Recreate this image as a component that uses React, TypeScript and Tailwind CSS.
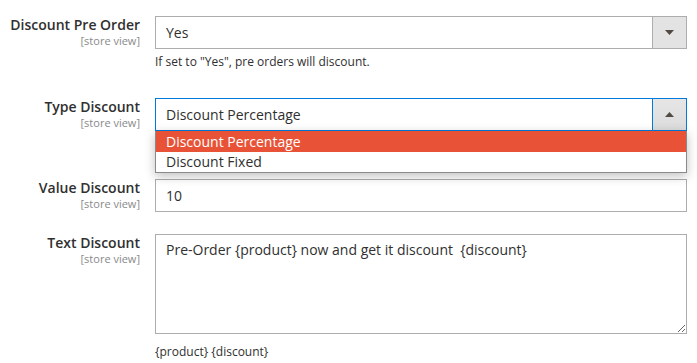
import React from "react";

const labelCls = "text-right text-[14px] leading-[19px] font-semibold text-[#303030]";
const scopeCls = "block text-right text-[11px] leading-[14px] font-normal text-[#8a8a8a]";

function Label({ text }: { text: string }) {
  return (
    <div className="-mt-px">
      <div className={labelCls}>{text}</div>
      <span className={scopeCls}>[store view]</span>
    </div>
  );
}

function Caret({ up }: { up?: boolean }) {
  return (
    <svg width="9" height="5" viewBox="0 0 9 5" className="block">
      {up ? <path d="M0 5 L4.5 0 L9 5 Z" fill="#514943" /> : <path d="M0 0 L9 0 L4.5 5 Z" fill="#514943" />}
    </svg>
  );
}

export default function App() {
  return (
    <div className="w-[697px] h-[363px] overflow-hidden bg-white font-['Open_Sans',sans-serif] text-[#303030] pr-[10px] pt-[16px]">
      {/* Discount Pre Order */}
      <div className="grid grid-cols-[140px_1fr] gap-x-[15px]">
        <Label text="Discount Pre Order" />
        <div>
          <div className="flex h-[33px] border border-[#adadad] bg-white">
            <div className="flex-1 pl-[10px] text-[14px] leading-[31px]">Yes</div>
            <div className="flex w-[34px] items-center justify-center border-l border-[#adadad] bg-[#e3e3e3]">
              <Caret />
            </div>
          </div>
          <div className="mt-[4px] text-[12px] leading-[18px]">If set to "Yes", pre orders will discount.</div>
        </div>
      </div>

      {/* Type Discount, open */}
      <div className="relative z-10 mt-[27px] grid grid-cols-[140px_1fr] gap-x-[15px]">
        <Label text="Type Discount" />
        <div className="relative">
          <div className="flex h-[33px] border border-[#007bdb] bg-white">
            <div className="flex-1 pl-[10px] text-[14px] leading-[31px]">Discount Percentage</div>
            <div className="flex w-[34px] items-center justify-center border-l border-[#007bdb] bg-gradient-to-b from-[#e6e6e6] to-[#dcdcdc]">
              <Caret up />
            </div>
          </div>
          <div className="absolute left-0 right-0 top-[33px] border border-t-0 border-[#8a8a8a] bg-white shadow-[0_3px_10px_rgba(0,0,0,0.25)]">
            <div className="h-[21px] bg-[#e85337] pl-[10px] text-[14px] leading-[21px] text-white">Discount Percentage</div>
            <div className="h-[20px] pl-[10px] text-[14px] leading-[20px]">Discount Fixed</div>
          </div>
        </div>
      </div>

      {/* Value Discount */}
      <div className="mt-[48px] grid grid-cols-[140px_1fr] gap-x-[15px]">
        <Label text="Value Discount" />
        <input
          readOnly
          value="10"
          className="h-[33px] w-full border border-[#adadad] bg-white pl-[10px] text-[14px] text-[#303030] outline-none"
        />
      </div>

      {/* Text Discount */}
      <div className="mt-[22px] grid grid-cols-[140px_1fr] gap-x-[15px]">
        <Label text="Text Discount" />
        <div>
          <textarea
            readOnly
            value="Pre-Order {product} now and get it discount  {discount}"
            className="block h-[100px] w-full border border-[#adadad] bg-white px-[10px] pt-[5px] text-[14px] leading-[19px] text-[#303030] outline-none"
          />
          <div className="mt-[9px] text-[12px] leading-[18px]">{"{product} {discount}"}</div>
        </div>
      </div>
    </div>
  );
}
